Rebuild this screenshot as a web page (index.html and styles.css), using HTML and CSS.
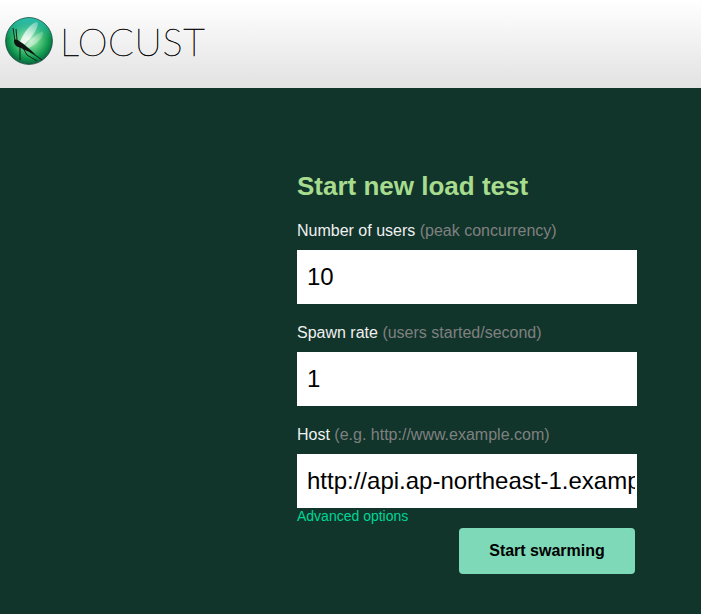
FILE: index.html
```html
<!DOCTYPE html>
<html lang="en">
<head>
<meta charset="utf-8">
<title>Locust</title>
<link rel="stylesheet" href="styles.css">
</head>
<body>
<header class="header">
  <svg class="logo-mark" viewBox="0 0 48 48" width="48" height="48" aria-hidden="true">
    <defs>
      <radialGradient id="ball" cx="50%" cy="45%" r="56%">
        <stop offset="0" stop-color="#c9f2d2"/>
        <stop offset="0.4" stop-color="#5ecb82"/>
        <stop offset="0.75" stop-color="#109a50"/>
        <stop offset="1" stop-color="#0a5f3c"/>
      </radialGradient>
      <linearGradient id="rim" x1="0" y1="0" x2="0" y2="1">
        <stop offset="0" stop-color="#2bbcae"/>
        <stop offset="0.45" stop-color="#2bbcae" stop-opacity="0"/>
      </linearGradient>
      <linearGradient id="wing" x1="0" y1="1" x2="1" y2="0">
        <stop offset="0" stop-color="#ffffff" stop-opacity="0.95"/>
        <stop offset="1" stop-color="#ffffff" stop-opacity="0.3"/>
      </linearGradient>
    </defs>
    <circle cx="24" cy="24" r="23.4" fill="url(#ball)" stroke="#17493f" stroke-width="0.8"/>
    <circle cx="24" cy="24" r="23" fill="url(#rim)"/>
    <path d="M15 25 C18 17 25 6 32 5 C35 7 30 17 19 28 Z" fill="url(#wing)"/>
    <path d="M20 29 C26 23 36 13 38 15 C39 20 30 29 23 31 Z" fill="url(#wing)" opacity="0.55"/>
    <path d="M9 24 C9 22 12 22 14 24 C19 27 25 32 31 38 C26 36 20 33 16 31 C12 30 9 28 9 24 Z" fill="#0c1512"/>
    <g fill="none" stroke="#0c1512" stroke-width="0.9">
      <path d="M10 24 L8 11"/>
      <path d="M12 23 L11 12"/>
      <path d="M15 30 L15 43"/>
      <path d="M18 31 L22 38 L32 44"/>
      <path d="M25 35 L33 40 L37 43"/>
    </g>
  </svg>
  <span class="logo-text">LOCUST</span>
</header>
<main class="main">
  <form class="form">
    <h2 class="title">Start new load test</h2>
    <label class="label" for="users">Number of users <small class="hint">(peak concurrency)</small></label>
    <input class="field" id="users" type="text" value="10">
    <label class="label" for="rate">Spawn rate <small class="hint">(users started/second)</small></label>
    <input class="field" id="rate" type="text" value="1">
    <label class="label" for="host">Host <small class="hint">(e.g. http://www.example.com)</small></label>
    <input class="field field-last" id="host" type="text" value="http://api.ap-northeast-1.example.com">
    <a class="advanced" href="#">Advanced options</a>
    <div class="actions"><button class="submit" type="button">Start swarming</button></div>
  </form>
</main>
</body>
</html>
```
FILE: styles.css
```css
* { box-sizing: border-box; }
html, body { margin: 0; height: 100%; }
body {
  background: #11352b;
  font-family: "Liberation Sans", Arial, sans-serif;
  overflow: hidden;
  display: flex;
  flex-direction: column;
}
.header {
  height: 88px;
  flex: none;
  display: flex;
  align-items: center;
  padding: 0 0 6px 5px;
  background: linear-gradient(#ffffff, #e2e2e2);
}
.logo-mark { flex: none; }
.logo-text {
  margin-left: 7px;
  font-family: Lato, "Liberation Sans", sans-serif;
  font-weight: 100;
  font-size: 38px;
  letter-spacing: 0.6px;
  color: #000;
  -webkit-text-stroke: 0.45px #000;
}
.main { flex: 1; padding: 83px 0 0 297px; }
.form { width: 340px; }
.title {
  margin: 0 0 21px;
  font-size: 26px;
  line-height: 30px;
  font-weight: bold;
  color: #a7dc8e;
}
.label {
  display: block;
  font-size: 16px;
  line-height: 18px;
  color: #f0f0f0;
  margin-bottom: 10px;
}
.hint { font-size: inherit; color: #808080; }
.field {
  display: block;
  width: 340px;
  height: 54px;
  margin: 0 0 20px;
  padding: 0 2px 0 10px;
  border: 0;
  border-radius: 0;
  background: #fff;
  color: #000;
  font-family: "Liberation Sans", Arial, sans-serif;
  font-size: 24px;
}
.field-last { margin-bottom: 0; }
.advanced {
  display: block;
  font-size: 14px;
  line-height: 17px;
  color: #00d596;
  text-decoration: none;
}
.actions { display: flex; justify-content: flex-end; padding: 3px 2px 0 0; }
.submit {
  width: 176px;
  height: 46px;
  border: 0;
  border-radius: 4px;
  background: #7ed9b9;
  color: #000;
  font-family: "Liberation Sans", Arial, sans-serif;
  font-size: 16px;
  font-weight: bold;
}
```
